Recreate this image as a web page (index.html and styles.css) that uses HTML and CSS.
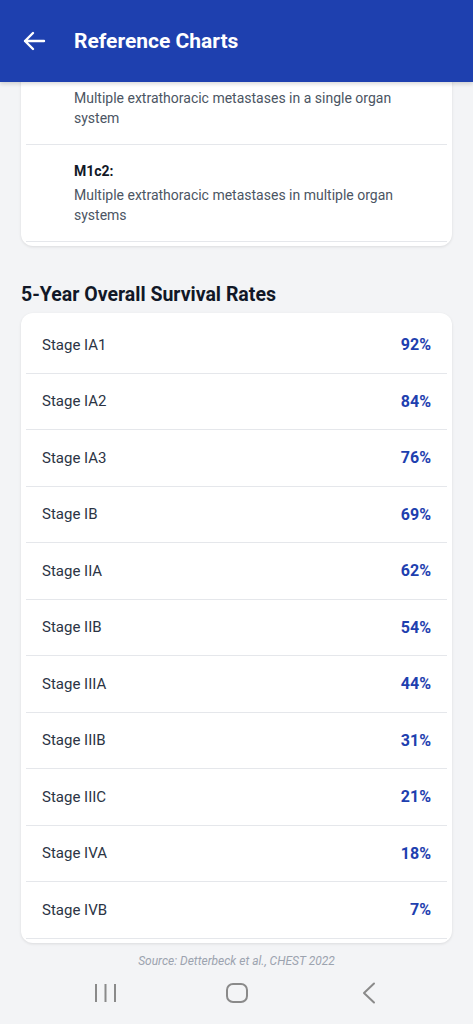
FILE: index.html
```html
<!DOCTYPE html>
<html>
<head>
	<title>Reference Charts</title>
	<link rel="stylesheet" href="styles.css">
</head>
<body>
	<header class="app-bar">
		<svg class="back-icon" width="24" height="20" viewBox="0 0 24 20">
			<path d="M22 10H3M11 2L3 10l8 8" fill="none" stroke="#fff" stroke-width="2.4" stroke-linecap="round" stroke-linejoin="round"/>
		</svg>
		<h1>Reference Charts</h1>
	</header>

	<main class="scroll">
		<div class="content">
			<div class="card">
				<!-- scrolled: title of this row is under the app bar -->
				<div class="term">
					<p class="term-desc">Multiple extrathoracic metastases in a single organ system</p>
				</div>
				<div class="term">
					<p class="term-title">M1c2:</p>
					<p class="term-desc">Multiple extrathoracic metastases in multiple organ systems</p>
				</div>
			</div>

			<h2 class="section-title">5-Year Overall Survival Rates</h2>
			<div class="card">
				<div class="rate"><span class="stage">Stage IA1</span><span class="pct">92%</span></div>
				<div class="rate"><span class="stage">Stage IA2</span><span class="pct">84%</span></div>
				<div class="rate"><span class="stage">Stage IA3</span><span class="pct">76%</span></div>
				<div class="rate"><span class="stage">Stage IB</span><span class="pct">69%</span></div>
				<div class="rate"><span class="stage">Stage IIA</span><span class="pct">62%</span></div>
				<div class="rate"><span class="stage">Stage IIB</span><span class="pct">54%</span></div>
				<div class="rate"><span class="stage">Stage IIIA</span><span class="pct">44%</span></div>
				<div class="rate"><span class="stage">Stage IIIB</span><span class="pct">31%</span></div>
				<div class="rate"><span class="stage">Stage IIIC</span><span class="pct">21%</span></div>
				<div class="rate"><span class="stage">Stage IVA</span><span class="pct">18%</span></div>
				<div class="rate"><span class="stage">Stage IVB</span><span class="pct">7%</span></div>
			</div>
			<p class="source">Source: Detterbeck et al., CHEST 2022</p>
		</div>
	</main>

	<nav class="sys-nav">
		<div class="nav-btn">
			<svg width="22" height="22" viewBox="0 0 22 22">
				<path d="M2 2v18M11.5 2v18M21 2v18" fill="none" stroke="#8a8a8a" stroke-width="2"/>
			</svg>
		</div>
		<div class="nav-btn">
			<svg width="22" height="22" viewBox="0 0 22 22">
				<rect x="1" y="2" width="20" height="18" rx="6" fill="none" stroke="#8a8a8a" stroke-width="2"/>
			</svg>
		</div>
		<div class="nav-btn">
			<svg width="14" height="22" viewBox="0 0 14 22">
				<path d="M12 1.5L2 11l10 9.5" fill="none" stroke="#8a8a8a" stroke-width="2" stroke-linecap="round" stroke-linejoin="round"/>
			</svg>
		</div>
	</nav>
</body>
</html>
```

FILE: styles.css
```css
* {
	box-sizing: border-box;
	margin: 0;
	padding: 0;
}

body {
	font-family: Roboto, 'Noto Sans', Arial, sans-serif;
	background-color: #f3f4f6;
	height: 1024px;
	display: flex;
	flex-direction: column;
	overflow: hidden;
}

.app-bar {
	height: 82px;
	flex-shrink: 0;
	background-color: #1e40af;
	display: flex;
	align-items: center;
	padding-left: 22px;
	gap: 28px;
	box-shadow: 0 2px 4px rgba(0, 0, 0, 0.15);
	position: relative;
	z-index: 2;
}

.back-icon {
	display: block;
}

.app-bar h1 {
	color: #fff;
	font-size: 21px;
	font-weight: 700;
	line-height: 28px;
}

.scroll {
	flex: 1;
	overflow: hidden;
	padding: 0 21px;
}

/* page is scrolled: the first card starts under the app bar */
.content {
	margin-top: -14px;
}

.card {
	background-color: #fff;
	border-radius: 12px;
	box-shadow: 0 1px 3px rgba(0, 0, 0, 0.1);
	padding: 4px 5px;
}

.term {
	padding: 16px 16px 16px 48px;
	border-bottom: 1px solid #e5e7eb;
}

.term-title {
	font-size: 14px;
	font-weight: 700;
	line-height: 20px;
	color: #111827;
	margin-bottom: 4px;
}

.term-desc {
	font-size: 14px;
	line-height: 20px;
	color: #4b5563;
}

.section-title {
	font-size: 19.5px;
	font-weight: 700;
	line-height: 28px;
	color: #111827;
	margin: 35px 0 4px;
}

.rate {
	display: flex;
	justify-content: space-between;
	align-items: center;
	height: 56.5px;
	padding: 0 16px;
	border-bottom: 1px solid #e5e7eb;
}

.stage {
	font-size: 15px;
	color: #2b3444;
}

.pct {
	font-size: 16px;
	font-weight: 700;
	color: #1e40af;
}

.source {
	margin-top: 10px;
	text-align: center;
	font-size: 12px;
	line-height: 16px;
	font-style: italic;
	color: #9ca3af;
}

.sys-nav {
	height: 50px;
	flex-shrink: 0;
	display: flex;
	justify-content: center;
	align-items: flex-start;
	padding-top: 8px;
}

.nav-btn {
	width: 132px;
	display: flex;
	justify-content: center;
}

.nav-btn svg {
	display: block;
}
```
